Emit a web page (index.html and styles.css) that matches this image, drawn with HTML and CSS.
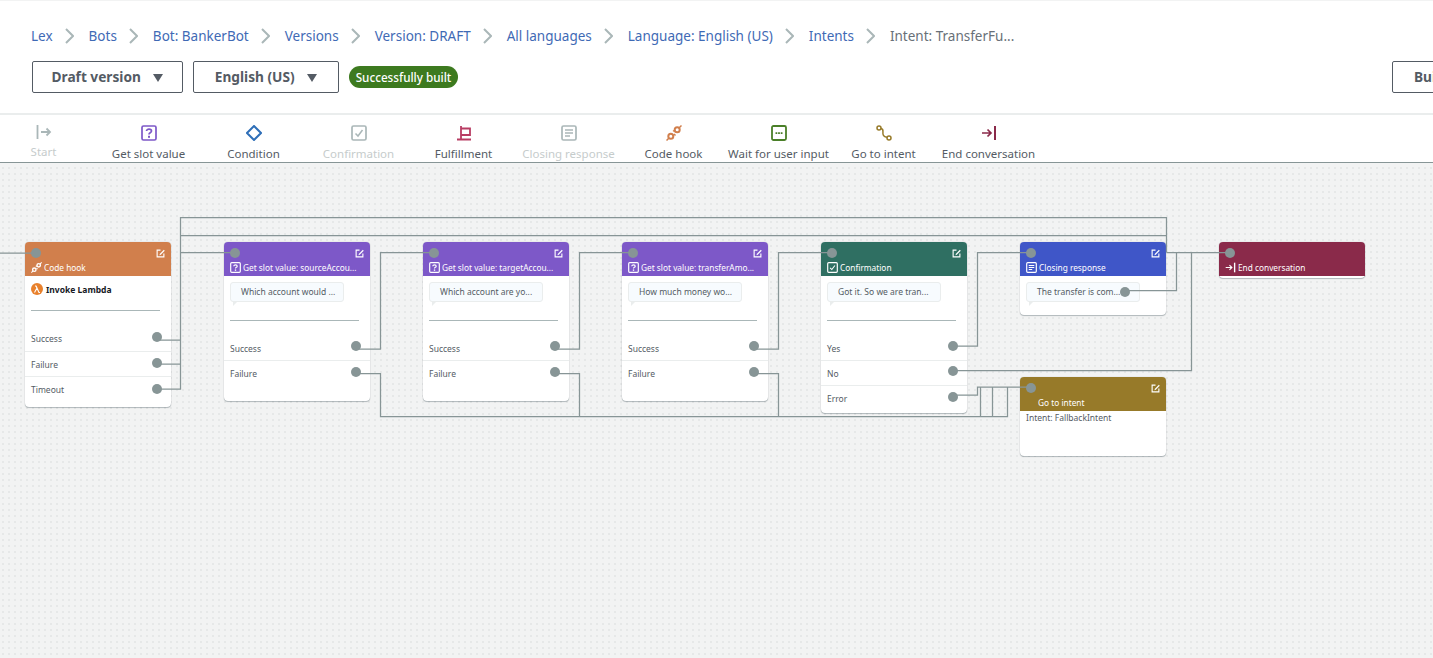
FILE: index.html
```html
<!DOCTYPE html>
<html lang="en">
<head>
    <meta charset="UTF-8">
    <title>Intent: TransferFunds</title>
    <link rel="stylesheet" href="styles.css">
</head>
<body>
    <svg width="0" height="0" class="defs">
        <symbol id="edit" viewBox="0 0 16 16">
            <path d="M8 2H2v12h12V8" fill="none" stroke="currentColor" stroke-width="2"/>
            <path d="M14 1.500 7 8.500 6 11l2.500-1 7-7z" fill="currentColor"/>
        </symbol>
        <symbol id="slot" viewBox="0 0 16 16">
            <rect x="1" y="1" width="14" height="14" rx="1.500" fill="none" stroke="currentColor" stroke-width="1.700"/>
            <path d="M5.500 6C5.500 3.500 10.500 3.500 10.500 6C10.500 8 8 7.500 8 9.500" fill="none" stroke="currentColor" stroke-width="1.700"/>
            <rect x="7" y="10.800" width="2" height="2" fill="currentColor"/>
        </symbol>
        <symbol id="check" viewBox="0 0 16 16">
            <rect x="1" y="1" width="14" height="14" rx="1.500" fill="none" stroke="currentColor" stroke-width="1.700"/>
            <path d="M4.500 8.500 7 11l4.500-6" fill="none" stroke="currentColor" stroke-width="1.500"/>
        </symbol>
        <symbol id="closing" viewBox="0 0 16 16">
            <rect x="1" y="1" width="14" height="14" rx="1.500" fill="none" stroke="currentColor" stroke-width="1.700"/>
            <path d="M4 5h8M4 8h8M4 11h5" fill="none" stroke="currentColor" stroke-width="1.500"/>
        </symbol>
        <symbol id="hook" viewBox="0 0 16 16">
            <circle cx="4.800" cy="11.200" r="2.500" fill="none" stroke="currentColor" stroke-width="2"/>
            <circle cx="11.200" cy="4.800" r="2.500" fill="none" stroke="currentColor" stroke-width="2"/>
            <path d="M.5 15.500 3 13M13 3 15.500.5M7 5.500l1.500 1M9.500 10.500 8 9" fill="none" stroke="currentColor" stroke-width="1.500"/>
        </symbol>
        <symbol id="end" viewBox="0 0 16 16">
            <path d="M1 8h9M6.500 4.500 10 8l-3.500 3.500" fill="none" stroke="currentColor" stroke-width="1.700"/>
            <path d="M14 1v14" stroke="currentColor" stroke-width="2"/>
        </symbol>
    </svg>

    <header class="top">
        <nav class="crumbs">
            <a>Lex</a><svg class="chev" viewBox="0 0 9 16"><path d="M1 1l7 7-7 7"/></svg>
            <a>Bots</a><svg class="chev" viewBox="0 0 9 16"><path d="M1 1l7 7-7 7"/></svg>
            <a>Bot: BankerBot</a><svg class="chev" viewBox="0 0 9 16"><path d="M1 1l7 7-7 7"/></svg>
            <a>Versions</a><svg class="chev" viewBox="0 0 9 16"><path d="M1 1l7 7-7 7"/></svg>
            <a>Version: DRAFT</a><svg class="chev" viewBox="0 0 9 16"><path d="M1 1l7 7-7 7"/></svg>
            <a>All languages</a><svg class="chev" viewBox="0 0 9 16"><path d="M1 1l7 7-7 7"/></svg>
            <a>Language: English (US)</a><svg class="chev" viewBox="0 0 9 16"><path d="M1 1l7 7-7 7"/></svg>
            <a>Intents</a><svg class="chev" viewBox="0 0 9 16"><path d="M1 1l7 7-7 7"/></svg>
            <span>Intent: TransferFu...</span>
        </nav>
        <div class="actions">
            <button class="btn btn-draft">Draft version <i class="caret"></i></button>
            <button class="btn btn-lang">English (US) <i class="caret"></i></button>
            <span class="pill">Successfully built</span>
            <button class="btn btn-build">Build</button>
        </div>
    </header>

    <div class="toolbar">
        <div class="tool tool-start off">
            <svg class="tool-icon" viewBox="0 0 16 16"><path d="M1.500 1v14" stroke="currentColor" stroke-width="1.800"/><path d="M5 8h9M10.500 4.500 14 8l-3.500 3.500" fill="none" stroke="currentColor" stroke-width="1.800"/></svg>
            <span>Start</span>
        </div>
        <div class="tool c-slot"><svg class="tool-icon"><use href="#slot"/></svg><span>Get slot value</span></div>
        <div class="tool c-cond">
            <svg class="tool-icon" viewBox="0 0 16 16"><path d="M8 1 15 8 8 15 1 8z" fill="none" stroke="currentColor" stroke-width="2"/></svg>
            <span>Condition</span>
        </div>
        <div class="tool off"><svg class="tool-icon"><use href="#check"/></svg><span>Confirmation</span></div>
        <div class="tool c-ful">
            <svg class="tool-icon" viewBox="0 0 16 16"><path d="M1 14.500h14M5 14.500V1M5 3.500h9v6.500H5" fill="none" stroke="currentColor" stroke-width="1.800"/></svg>
            <span>Fulfillment</span>
        </div>
        <div class="tool off"><svg class="tool-icon"><use href="#closing"/></svg><span>Closing response</span></div>
        <div class="tool c-hook"><svg class="tool-icon"><use href="#hook"/></svg><span>Code hook</span></div>
        <div class="tool c-wait">
            <svg class="tool-icon" viewBox="0 0 16 16"><rect x="1" y="1" width="14" height="14" rx="1.500" fill="none" stroke="currentColor" stroke-width="1.800"/><path d="M4.500 7.200h1.800v1.800H4.500zM7.100 7.200h1.800v1.800H7.100zM9.700 7.200h1.800v1.800H9.700z" fill="currentColor"/></svg>
            <span>Wait for user input</span>
        </div>
        <div class="tool c-goto">
            <svg class="tool-icon" viewBox="0 0 16 16"><circle cx="3" cy="3" r="2" fill="none" stroke="currentColor" stroke-width="1.500"/><circle cx="13" cy="13" r="2" fill="none" stroke="currentColor" stroke-width="1.500"/><path d="M5 3.500C9 4 5.500 8 7.500 10.500S10 11.500 11 12.500" fill="none" stroke="currentColor" stroke-width="1.500"/></svg>
            <span>Go to intent</span>
        </div>
        <div class="tool c-end"><svg class="tool-icon"><use href="#end"/></svg><span>End conversation</span></div>
    </div>

    <main class="canvas">
        <!-- svg origin sits at the top of the canvas, y = page y - 163 -->
        <svg class="edges" width="1433" height="495" viewBox="0 163 1433 495">
            <path d="M0 253H36"/>
            <path d="M156 340H180.500M156 364H180.500M156 389H180.500V217.500H1166.500V252.500"/>
            <path d="M180.500 252.500H235M180.500 235.500H1166.500"/>
            <path d="M356 349H380.500V252.500H434"/>
            <path d="M555 349H579.500V252.500H633"/>
            <path d="M754 349H778.500V252.500H832"/>
            <path d="M953 346H977.500V252.500H1031"/>
            <path d="M356 373.500H380.500V416.500H1007.500V387"/>
            <path d="M555 373.500H579.500V416.500M754 373.500H778.500V416.500"/>
            <path d="M980.500 416.500V387M992.500 416.500V387"/>
            <path d="M953 395H977.500V387H1031"/>
            <path d="M953 370.500H1191.500V252.500"/>
            <path d="M1126 290.500H1176.500V252.500"/>
            <path d="M1166.500 252.500H1230"/>
        </svg>

        <section class="node n-hook">
            <div class="node-head bg-hook">
                <span class="port port-in"></span>
                <svg class="edit"><use href="#edit"/></svg>
                <div class="node-title"><svg class="head-icon"><use href="#hook"/></svg>Code hook</div>
            </div>
            <div class="lambda">
                <svg class="lambda-icon" viewBox="0 0 12 12"><circle cx="6" cy="6" r="6" fill="#e8812d"/><path d="M3.500 9.500 6 5 5 3H4M5.500 4 8 9.500H9" fill="none" stroke="#fff" stroke-width="1.100"/></svg>
                <b>Invoke Lambda</b>
            </div>
            <hr class="rule rule-hook">
            <ul class="rows rows-hook">
                <li>Success<span class="port"></span></li>
                <li>Failure<span class="port"></span></li>
                <li>Timeout<span class="port"></span></li>
            </ul>
        </section>

        <section class="node n-slot1">
            <div class="node-head bg-slot">
                <span class="port port-in"></span>
                <svg class="edit"><use href="#edit"/></svg>
                <div class="node-title"><svg class="head-icon"><use href="#slot"/></svg>Get slot value: sourceAccou...</div>
            </div>
            <div class="bubble">Which account would ...</div>
            <hr class="rule">
            <ul class="rows">
                <li>Success<span class="port"></span></li>
                <li>Failure<span class="port"></span></li>
            </ul>
        </section>

        <section class="node n-slot2">
            <div class="node-head bg-slot">
                <span class="port port-in"></span>
                <svg class="edit"><use href="#edit"/></svg>
                <div class="node-title"><svg class="head-icon"><use href="#slot"/></svg>Get slot value: targetAccou...</div>
            </div>
            <div class="bubble">Which account are yo...</div>
            <hr class="rule">
            <ul class="rows">
                <li>Success<span class="port"></span></li>
                <li>Failure<span class="port"></span></li>
            </ul>
        </section>

        <section class="node n-slot3">
            <div class="node-head bg-slot">
                <span class="port port-in"></span>
                <svg class="edit"><use href="#edit"/></svg>
                <div class="node-title"><svg class="head-icon"><use href="#slot"/></svg>Get slot value: transferAmo...</div>
            </div>
            <div class="bubble">How much money wo...</div>
            <hr class="rule">
            <ul class="rows">
                <li>Success<span class="port"></span></li>
                <li>Failure<span class="port"></span></li>
            </ul>
        </section>

        <section class="node n-conf">
            <div class="node-head bg-conf">
                <span class="port port-in"></span>
                <svg class="edit"><use href="#edit"/></svg>
                <div class="node-title"><svg class="head-icon"><use href="#check"/></svg>Confirmation</div>
            </div>
            <div class="bubble">Got it. So we are tran...</div>
            <hr class="rule">
            <ul class="rows">
                <li>Yes<span class="port"></span></li>
                <li>No<span class="port"></span></li>
                <li>Error<span class="port"></span></li>
            </ul>
        </section>

        <section class="node n-close">
            <div class="node-head bg-close">
                <span class="port port-in"></span>
                <svg class="edit"><use href="#edit"/></svg>
                <div class="node-title"><svg class="head-icon"><use href="#closing"/></svg>Closing response</div>
            </div>
            <div class="bubble">The transfer is com...<span class="port port-bubble"></span></div>
        </section>

        <section class="node n-goto">
            <div class="node-head bg-goto">
                <span class="port port-in"></span>
                <svg class="edit"><use href="#edit"/></svg>
                <div class="node-title title-indent">Go to intent</div>
            </div>
            <p class="intent-name">Intent: FallbackIntent</p>
        </section>

        <section class="node n-end">
            <div class="node-head bg-end">
                <span class="port port-in"></span>
                <div class="node-title"><svg class="head-icon"><use href="#end"/></svg>End conversation</div>
            </div>
        </section>
    </main>
</body>
</html>
```

FILE: styles.css
```css
* {
    box-sizing: border-box;
}
html, body {
    height: 100%;
}
body {
    margin: 0;
    overflow: hidden;
    font-family: "Noto Sans", sans-serif;
    color: #545b64;
    background: #fff;
}
.defs {
    display: block;
    height: 0;
}

/* header */
.top {
    height: 115px;
    padding: 27px 0 0 31px;
    border-top: 1px solid #f2f3f3;
    border-bottom: 2px solid #eaeded;
}
.crumbs {
    display: flex;
    align-items: center;
    height: 16px;
    font-size: 13.500px;
    white-space: nowrap;
}
.crumbs a {
    color: #3f6ab5;
}
.crumbs span {
    color: #687078;
}
.chev {
    width: 9px;
    height: 16px;
    margin: 0 15px 0 12px;
    fill: none;
    stroke: #aab7b8;
    stroke-width: 2;
}
.actions {
    display: flex;
    align-items: center;
    width: 1500px;
    margin-top: 17px;
    margin-left: 1px;
}
.btn {
    height: 32px;
    padding: 0 0 2px;
    border: 1px solid #545b64;
    border-radius: 2px;
    background: #fff;
    color: #545b64;
    font-family: inherit;
    font-size: 13.700px;
    font-weight: 700;
}
.btn-draft {
    width: 151px;
}
.btn-lang {
    width: 146px;
    margin-left: 10px;
}
.btn-build {
    width: 100px;
    margin-left: 934px;
    text-align: left;
    padding-left: 21px;
}
.caret {
    display: inline-block;
    width: 0;
    height: 0;
    margin-left: 9px;
    border-left: 5.500px solid transparent;
    border-right: 5.500px solid transparent;
    border-top: 8px solid #545b64;
}
.pill {
    width: 109px;
    height: 22px;
    margin-left: 10px;
    border-radius: 11px;
    background: #3d7a1f;
    color: #fff;
    font-size: 11.700px;
    font-weight: 500;
    line-height: 22px;
    text-align: center;
}

/* toolbar */
.toolbar {
    display: flex;
    height: 48px;
    padding-top: 10px;
    border-bottom: 1px solid #879596;
    background: #fff;
}
.tool {
    display: flex;
    flex-direction: column;
    align-items: center;
    flex: 0 0 105px;
    font-size: 11.500px;
    white-space: nowrap;
}
.tool span {
    margin-top: 5px;
}
.tool-icon {
    width: 16px;
    height: 16px;
    flex: none;
}
.tool-start {
    flex-basis: 87px;
    margin-right: 9px;
}
.tool-start .tool-icon {
    margin-top: -1px;
}
.tool-start span {
    margin-top: 4px;
}
.off { color: #aab7b8; }
.off span { color: #c6cccc; }
.c-slot .tool-icon { color: #7d58c8; }
.c-cond .tool-icon { color: #2f6fb8; }
.c-ful .tool-icon { color: #b83c63; }
.c-hook .tool-icon { color: #d17f4c; }
.c-wait .tool-icon { color: #4a7f28; }
.c-goto .tool-icon { color: #977a29; }
.c-end .tool-icon { color: #8a2a4a; }

/* canvas */
.canvas {
    position: relative;
    height: 495px;
    overflow: hidden;
    background-color: #f2f3f3;
    background-image: radial-gradient(circle, #e6e8e8 1px, transparent 1.200px);
    background-size: 6px 6px;
    background-position: 0 2px;
}
.edges {
    position: absolute;
    left: 0;
    top: 0;
    z-index: 2;
    pointer-events: none;
}
.edges path {
    fill: none;
    stroke: #879596;
    stroke-width: 1.250;
}
.node {
    position: absolute;
    width: 146px;
    border-radius: 4px;
    background: #fff;
    box-shadow: 0 1px 1px rgba(0, 28, 36, 0.25), 0 0 1px rgba(0, 28, 36, 0.3);
    font-size: 8.500px;
    color: #545b64;
}
.n-hook { left: 25px; top: 79px; height: 165px; }
.n-slot1 { left: 224px; top: 79px; height: 159px; }
.n-slot2 { left: 423px; top: 79px; height: 159px; }
.n-slot3 { left: 622px; top: 79px; height: 159px; }
.n-conf { left: 821px; top: 79px; height: 171px; }
.n-close { left: 1020px; top: 79px; height: 73px; }
.n-goto { left: 1020px; top: 214px; height: 79px; }
.n-end { left: 1219px; top: 79px; height: 36px; }

.node-head {
    position: relative;
    height: 34px;
    padding: 20px 6px 0;
    border-radius: 4px 4px 0 0;
    color: #fff;
}
.bg-hook { background: #d17f4c; }
.bg-slot { background: #7d58c8; }
.bg-conf { background: #2f6f62; }
.bg-close { background: #3f56c8; }
.bg-goto { background: #977a29; }
.bg-end { background: #8a2a4a; }
.node-title {
    display: flex;
    align-items: center;
    font-size: 8.300px;
    line-height: 11px;
    white-space: nowrap;
}
.title-indent {
    padding-left: 12px;
}
.head-icon {
    width: 11px;
    height: 11px;
    flex: none;
    margin-right: 2px;
}
.edit {
    position: absolute;
    right: 6px;
    top: 7px;
    width: 9px;
    height: 9px;
}
.port {
    position: absolute;
    right: 9px;
    top: 50%;
    width: 10px;
    height: 10px;
    margin-top: -7px;
    border-radius: 50%;
    background: #879596;
    z-index: 3;
}
.rows-hook .port {
    margin-top: -6px;
}
.port-in {
    left: 6px;
    right: auto;
    top: 6px;
    margin-top: 0;
}
.port-bubble {
    right: 9px;
    margin-top: -5px;
}
.bubble {
    position: relative;
    width: 114px;
    height: 20px;
    margin: 6px 0 0 6px;
    padding-left: 10px;
    border: 1px solid #eaeded;
    border-radius: 3px;
    background: #f7fbfe;
    line-height: 18px;
    white-space: nowrap;
}
.bubble::after {
    content: "";
    position: absolute;
    left: 2px;
    top: 18px;
    border-top: 5px solid #eaeded;
    border-right: 5px solid transparent;
}
.rule {
    height: 1px;
    width: 129px;
    margin: 18px 0 0 6px;
    border: 0;
    background: #aab7b8;
}
.rule-hook {
    margin-top: 15px;
}
.rows {
    list-style: none;
    margin: 15px 0 0;
    padding: 0;
}
.rows li {
    position: relative;
    height: 25px;
    padding: 0 6px;
    line-height: 25px;
    border-bottom: 1px solid #eaeded;
}
.rows-hook li {
    height: 25.500px;
}
.rows li:last-child {
    border-bottom: 0;
}
.lambda {
    display: flex;
    align-items: center;
    height: 12px;
    margin: 7px 0 0 6px;
    gap: 3px;
    color: #16191f;
}
.lambda-icon {
    width: 12px;
    height: 12px;
}
.intent-name {
    margin: 0;
    padding: 1px 6px;
    line-height: 11px;
}
```
